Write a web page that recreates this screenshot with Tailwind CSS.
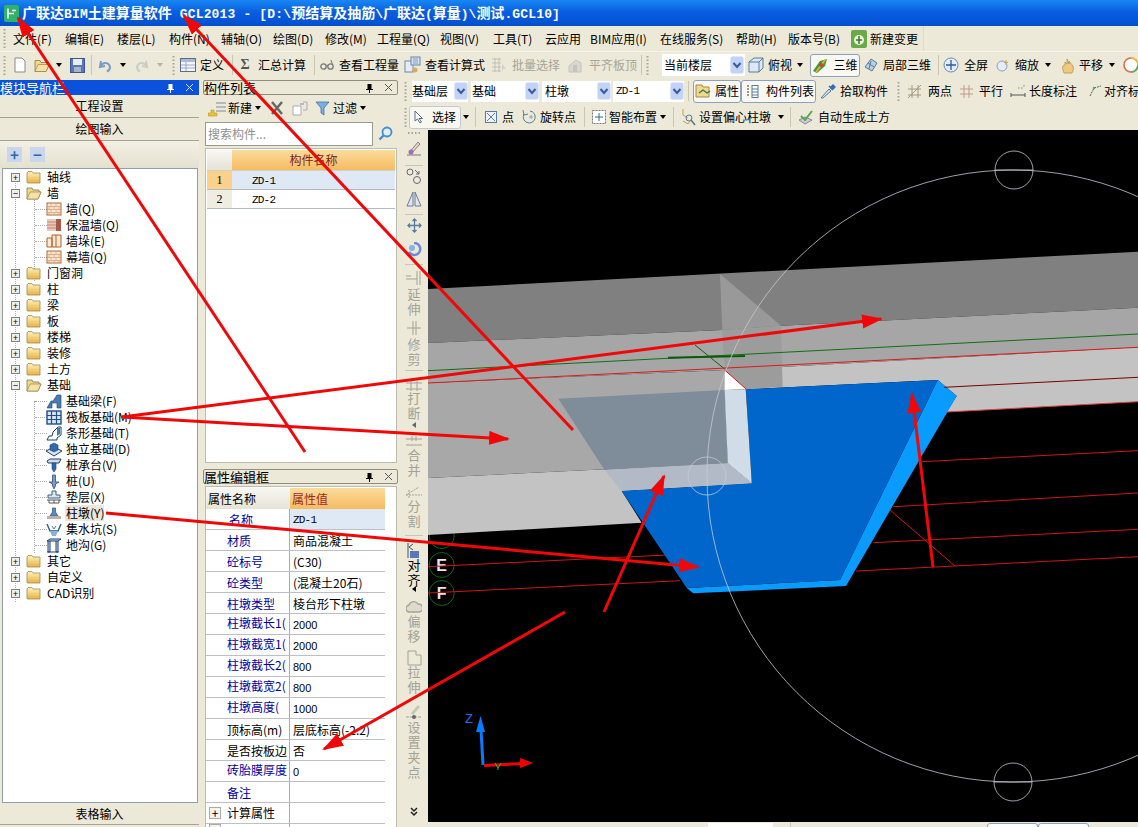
<!DOCTYPE html>
<html lang="zh-CN">
<head>
<meta charset="UTF-8">
<title>GCL2013</title>
<script src="https://cdn.jsdelivr.net/npm/@tailwindcss/browser@4"></script>
</head>
<body class="bg-[#ece9d8]">
<!-- shared icons -->
<svg class="absolute w-0 h-0">
  <defs>
    <linearGradient id="fold" x1="0" y1="0" x2="0" y2="1"><stop offset="0" stop-color="#fff3c0"/><stop offset="1" stop-color="#e8b040"/></linearGradient>
    <symbol id="folder" viewBox="0 0 15 14"><path d="M1 3 L1 12.5 Q1 13 2 13 L14 13 L14 3 L7 3 L6 1.5 L2 1.5 Z" fill="url(#fold)" stroke="#a08a50" stroke-width=".8"/></symbol>
    <symbol id="folderopen" viewBox="0 0 16 14"><path d="M1 2 L1 13 L12 13 L15 6 L13 6 L13 4 L7 4 L6 2 Z" fill="#f0d890" stroke="#8a7840" stroke-width=".8"/><path d="M1 13 L4 6 L15 6 L12 13 Z" fill="#f6e2a4" stroke="#8a7840" stroke-width=".6"/></symbol>
    <symbol id="wall" viewBox="0 0 16 14"><rect x="1" y="1" width="14" height="12" fill="#fbe9d4" stroke="#a86a3a"/><path d="M1 4.5H15M1 7.5H15M1 10.5H15M5 1V4.5M10 1V4.5M3 4.5V7.5M8 4.5V7.5M13 4.5V7.5M5 7.5V10.5M10 7.5V10.5M3 10.5V13M8 10.5V13M13 10.5V13" stroke="#d89a68" stroke-width=".7" fill="none"/></symbol>
    <symbol id="grip" viewBox="0 0 3 21"><path d="M1.5 1V20" stroke="#a8a593" stroke-width="2" stroke-dasharray="1.5 2" fill="none"/></symbol>
    <symbol id="drop" viewBox="0 0 14 18"><rect x=".5" y=".5" width="13" height="17" rx="2" fill="#c3d3f5" stroke="#dfe8fb"/><path d="M3.5 7 L7 11 L10.5 7" stroke="#3a5a9a" stroke-width="2" fill="none"/></symbol>
  </defs>
</svg>

<div class="relative w-[1138px] h-[827px] overflow-hidden flex flex-col bg-[#ece9d8] text-black text-[12px] leading-[16px] font-['Noto_Sans_CJK_SC',sans-serif]">

  <!-- title bar -->
  <div class="h-[26px] shrink-0 flex items-center pl-[4px] bg-gradient-to-b from-[#1a86f2] via-[#0a5be0] to-[#0250cf]">
    <svg class="w-[15px] h-[17px]" viewBox="0 0 15 17"><rect width="15" height="17" rx="2" fill="#2fb36a"/><path d="M4 3.5V13.5M4 8.5H10M8 5.5H12" stroke="#fff" stroke-width="1.6" fill="none"/></svg>
    <span class="ml-[3px] text-white font-bold text-[14px] whitespace-pre">广联达<span class="font-['Liberation_Mono',monospace] text-[13px] tracking-[.15px]">BIM</span>土建算量软件<span class="font-['Liberation_Mono',monospace] text-[13px] tracking-[.15px]"> GCL2013 - [D:\</span>预结算及抽筋<span class="font-['Liberation_Mono',monospace] text-[13px]">\</span>广联达<span class="font-['Liberation_Mono',monospace] text-[13px]">(</span>算量<span class="font-['Liberation_Mono',monospace] text-[13px]">)\</span>测试<span class="font-['Liberation_Mono',monospace] text-[13px] tracking-[.15px]">.GCL10]</span></span>
  </div>

  <!-- menu bar -->
  <div class="h-[26px] shrink-0 flex items-center bg-[#ece9d8] border-b border-[#f6f4ea]">
    <div class="w-[924px] h-full flex items-center bg-[#ece9d8] border-r border-[#dedbc8] pl-[3px]">
      <svg class="w-[3px] h-[21px] mr-[7px]"><use href="#grip"/></svg>
      <span class="w-[52px]">文件(F)</span>
      <span class="w-[52px]">编辑(E)</span>
      <span class="w-[52px]">楼层(L)</span>
      <span class="w-[52px]">构件(N)</span>
      <span class="w-[52px]">辅轴(O)</span>
      <span class="w-[52px]">绘图(D)</span>
      <span class="w-[52px]">修改(M)</span>
      <span class="w-[63px]">工程量(Q)</span>
      <span class="w-[53px]">视图(V)</span>
      <span class="w-[52px]">工具(T)</span>
      <span class="w-[45px]">云应用</span>
      <span class="w-[70px]">BIM应用(I)</span>
      <span class="w-[76px]">在线服务(S)</span>
      <span class="w-[52px]">帮助(H)</span>
      <span class="w-[63px]">版本号(B)</span>
      <svg class="w-[16px] h-[18px] mr-[3px]" viewBox="0 0 16 18"><rect width="16" height="18" rx="2" fill="#6aa84a"/><circle cx="8" cy="10" r="5" fill="#e8f4d8"/><path d="M8 6V14M5 10H11" stroke="#3a7a2a" stroke-width="1.5"/></svg>
      <span>新建变更</span>
    </div>
  </div>

  <!-- standard toolbar -->
  <div class="h-[26px] shrink-0 flex items-center pl-[3px] whitespace-nowrap [&>*]:shrink-0">
    <svg class="w-[3px] h-[21px] mr-[7px]"><use href="#grip"/></svg>
    <svg class="w-[14px] h-[16px] mr-[7px]" viewBox="0 0 14 16"><path d="M2 1H9L12 4V15H2Z" fill="#fff" stroke="#8a8a8a"/></svg>
    <svg class="w-[16px] h-[15px]" viewBox="0 0 16 14"><use href="#folderopen"/></svg>
    <span class="ml-[6px] w-0 h-0 border-x-[3px] border-x-transparent border-t-[4px] border-t-black"></span>
    <svg class="w-[15px] h-[15px] ml-[8px]" viewBox="0 0 15 15"><rect x=".5" y=".5" width="14" height="14" fill="#5a78b8" stroke="#3a5590"/><rect x="3" y="1" width="9" height="6" fill="#e8eef8"/><rect x="4" y="9" width="7" height="5" fill="#a8b4c8"/></svg>
    <div class="w-px h-[20px] bg-[#c9c6b4] ml-[6px] mr-[5px]"></div>
    <svg class="w-[16px] h-[15px]" viewBox="0 0 16 15"><path d="M4 3 L3 9 L8 8 M3.5 8 C6 3.5 12 4 13 9 C13 11 12 12.5 10 13.5" stroke="#7a9ac8" stroke-width="2" fill="none"/></svg>
    <span class="ml-[7px] w-0 h-0 border-x-[3px] border-x-transparent border-t-[4px] border-t-black"></span>
    <svg class="w-[16px] h-[15px] ml-[8px]" viewBox="0 0 16 15"><path d="M12 3 L13 9 L8 8 M12.5 8 C10 3.5 4 4 3 9 C3 11 4 12.5 6 13.5" stroke="#c6cfc4" stroke-width="2" fill="none"/></svg>
    <span class="ml-[7px] w-0 h-0 border-x-[3px] border-x-transparent border-t-[4px] border-t-[#b8b5a5]"></span>
    <svg class="w-[3px] h-[21px] ml-[9px] mr-[5px]"><use href="#grip"/></svg>
    <svg class="w-[16px] h-[14px] mr-[4px]" viewBox="0 0 16 14"><rect x=".5" y=".5" width="15" height="13" fill="#f4f6fa" stroke="#5a6a8a"/><rect x="1" y="1" width="14" height="3" fill="#a8bad8"/><path d="M6 4V13M1 7H15M1 10H15" stroke="#8898b8" stroke-width=".8"/></svg>
    <span class="w-[32px]">定义</span>
    <div class="w-px h-[20px] bg-[#c9c6b4] mr-[5px]"></div>
    <span class="w-[14px] text-[14px] text-[#555] font-bold mr-[6px] text-center font-['Liberation_Serif',serif]">Σ</span>
    <span class="w-[56px]">汇总计算</span>
    <div class="w-px h-[20px] bg-[#c9c6b4] mr-[5px]"></div>
    <svg class="w-[14px] h-[12px] mr-[5px]" viewBox="0 0 14 12"><circle cx="3.5" cy="7.5" r="2.7" fill="none" stroke="#777" stroke-width="1.3"/><circle cx="10.5" cy="7.5" r="2.7" fill="none" stroke="#777" stroke-width="1.3"/><path d="M6 7C7 6 8 6 8 7M12.5 5.5L11 1" stroke="#777" fill="none"/></svg>
    <span class="w-[65px]">查看工程量</span>
    <svg class="w-[17px] h-[18px] mr-[4px]" viewBox="0 0 17 18"><rect x="1" y="5" width="8" height="11" fill="#e8edf5" stroke="#6a88b0"/><rect x="7" y="1" width="9" height="8" fill="#d4dff0" stroke="#6a88b0"/><path d="M9 3H14M9 5H14M9 7H14" stroke="#6a88b0" stroke-width=".7"/><circle cx="11" cy="14" r="2.5" fill="#e0a850"/></svg>
    <span class="w-[66px]">查看计算式</span>
    <svg class="w-[16px] h-[16px] mr-[5px] opacity-50" viewBox="0 0 16 16"><path d="M1 2H10M1 6H10M1 10H10M1 14H10M4 1V15M8 1V15" stroke="#999" fill="none"/><path d="M11 7L15 12H12L11 15Z" fill="#bbb"/></svg>
    <span class="w-[55px] text-[#a6a596]">批量选择</span>
    <svg class="w-[16px] h-[16px] mr-[6px] opacity-60" viewBox="0 0 16 16"><path d="M2 15V9L9 3L14 6V15Z" fill="#ccc" stroke="#aaa"/><rect x="6" y="8" width="4" height="7" fill="#aaa"/></svg>
    <span class="w-[52px] text-[#a6a596]">平齐板顶</span>
    <div class="w-px h-[20px] bg-[#c9c6b4] mr-[4px]"></div>
    <svg class="w-[3px] h-[21px] mr-[13px]"><use href="#grip"/></svg>
    <div class="w-[83px] h-[22px] flex items-center justify-between bg-white pl-[2px]"><span>当前楼层</span><svg class="w-[14px] h-[18px] mr-[1px]"><use href="#drop"/></svg></div>
    <svg class="w-[16px] h-[16px] ml-[3px] mr-[4px]" viewBox="0 0 16 16"><path d="M1 5L6 1H15V11L11 15H1Z" fill="#dce8f5" stroke="#5a7a9a"/><path d="M1 5H11V15M11 5L15 1" stroke="#5a7a9a" fill="none"/></svg>
    <span class="w-[29px]">俯视</span>
    <span class="w-0 h-0 border-x-[3px] border-x-transparent border-t-[4px] border-t-black"></span>
    <div class="ml-[7px] w-[50px] h-[23px] flex items-center justify-center gap-[3px] bg-[#f8f7f0] border border-[#8da0c0] rounded-[3px]">
      <svg class="w-[18px] h-[17px] shrink-0" viewBox="0 0 18 17"><path d="M1 14L8 4L15 2L13 9L5 16Z" fill="#3a9a3a"/><path d="M4 15L13 3" stroke="#e8b030" stroke-width="2"/><circle cx="9" cy="8" r="2" fill="#e03a2a"/></svg><span>三维</span>
    </div>
    <svg class="w-[16px] h-[16px] ml-[3px] mr-[4px]" viewBox="0 0 16 16"><path d="M2 10L8 2L14 6L9 14Z" fill="#b8cfe8" stroke="#5a7a9a"/><path d="M5 6L11 10M8 4L6 12" stroke="#5a7a9a"/></svg>
    <span class="w-[55px]">局部三维</span>
    <div class="w-px h-[20px] bg-[#c9c6b4] mr-[4px]"></div>
    <svg class="w-[16px] h-[16px] mr-[5px]" viewBox="0 0 16 16"><circle cx="8" cy="8" r="7" fill="#e4ecf8" stroke="#6a8ab8"/><path d="M8 3V13M3 8H13" stroke="#2a5aa0" stroke-width="1.3"/></svg>
    <span class="w-[32px]">全屏</span>
    <svg class="w-[15px] h-[15px] mr-[4px]" viewBox="0 0 15 15"><circle cx="6" cy="8" r="5" fill="#e4ecf8" stroke="#8aa0c0"/><path d="M10 2V7M8 4.5H12" stroke="#c8a050"/></svg>
    <span class="w-[30px]">缩放</span>
    <span class="w-0 h-0 border-x-[3px] border-x-transparent border-t-[4px] border-t-black"></span>
    <svg class="w-[14px] h-[18px] ml-[10px] mr-[4px]" viewBox="0 0 14 18"><path d="M3 17C1 12 1 9 4 9V6L6 8V3L8 8V5L12 10C13 13 12 15 11 17Z" fill="#f0c880" stroke="#b08a40" stroke-width=".7"/></svg>
    <span class="w-[30px]">平移</span>
    <span class="w-0 h-0 border-x-[3px] border-x-transparent border-t-[4px] border-t-black"></span>
    <svg class="w-[18px] h-[18px] ml-[7px]" viewBox="0 0 18 18"><circle cx="9" cy="9" r="7" fill="#fff" stroke="#e06a4a" stroke-width="1.6"/><path d="M9 2A7 7 0 0 1 16 9" stroke="#e8c040" stroke-width="1.6" fill="none"/><path d="M16 9A7 7 0 0 1 9 16" stroke="#4ab06a" stroke-width="1.6" fill="none"/></svg>
  </div>

  <!-- work area -->
  <div class="flex-1 flex min-h-0">

    <!-- module navigation -->
    <div class="w-[199px] shrink-0 flex flex-col">
      <div class="h-[15px] mt-[2px] shrink-0 flex items-center bg-[#0a52dc] text-white text-[13px]">
        <span class="flex-1">模块导航栏</span>
        <svg class="w-[9px] h-[10px] mr-[10px]" viewBox="0 0 9 10"><path d="M2.5 1H6.5V6H8V7H5V10H4V7H1V6H2.5Z" fill="#fff"/></svg>
        <svg class="w-[9px] h-[9px] mr-[5px]" viewBox="0 0 9 9"><path d="M1 1L8 8M8 1L1 8" stroke="#dfe8ff" fill="none"/></svg>
      </div>
      <div class="h-[23px] shrink-0 flex items-center justify-center bg-[#ece9d8] border-b border-[#a5a391]">工程设置</div>
      <div class="h-[23px] shrink-0 flex items-center justify-center bg-[#ece9d8] border-b border-[#a5a391]">绘图输入</div>
      <div class="h-[27px] shrink-0 flex items-center gap-[8px] pl-[7px] bg-gradient-to-b from-[#f2f0e4] to-[#e4e1cf]">
        <span class="w-[15px] h-[15px] flex items-center justify-center bg-[#c9d6ee] text-[#2d6ea8] font-bold text-[15px]">+</span>
        <span class="w-[15px] h-[15px] flex items-center justify-center bg-[#c9d6ee] text-[#2d6ea8] font-bold text-[15px]">−</span>
      </div>
      <!-- tree -->
      <div class="relative h-[635px] shrink-0 ml-[2px] mr-[1px] bg-white border border-[#8e9db0]">
        <div class="absolute left-[12px] top-[8px] h-[425px] border-l border-dotted border-[#aaa]"></div>
        <div class="absolute left-[31px] top-[24px] h-[88px] border-l border-dotted border-[#aaa]"></div>
        <div class="absolute left-[31px] top-[232px] h-[152px] border-l border-dotted border-[#aaa]"></div>

        <div class="relative flex items-center h-4 pl-[8px]"><span class="w-[9px] h-[9px] border border-[#808080] bg-[#eee] flex items-center justify-center text-[9px] leading-[7px]">+</span><svg class="w-[15px] h-[14px] ml-[6px]"><use href="#folder"/></svg><span class="ml-[6px]">轴线</span></div>
        <div class="relative flex items-center h-4 pl-[8px]"><span class="w-[9px] h-[9px] border border-[#808080] bg-[#eee] flex items-center justify-center text-[9px] leading-[7px]">−</span><svg class="w-[16px] h-[14px] ml-[6px]"><use href="#folderopen"/></svg><span class="ml-[5px]">墙</span></div>
        <div class="relative flex items-center h-4 pl-[32px]"><span class="w-[12px] border-t border-dotted border-[#aaa]"></span><svg class="w-[16px] h-[14px] -ml-[1px]"><use href="#wall"/></svg><span class="ml-[4px] whitespace-nowrap">墙(Q)</span></div>
        <div class="relative flex items-center h-4 pl-[32px]"><span class="w-[12px] border-t border-dotted border-[#aaa]"></span><svg class="w-[16px] h-[14px] -ml-[1px]" viewBox="0 0 16 14"><rect x="1" y="1" width="14" height="12" fill="#e8c8b8"/><path d="M1 4H10M1 7H10M1 10H10" stroke="#b88a7a"/><rect x="10" y="1" width="5" height="12" fill="#a85a4a"/></svg><span class="ml-[4px] whitespace-nowrap">保温墙(Q)</span></div>
        <div class="relative flex items-center h-4 pl-[32px]"><span class="w-[12px] border-t border-dotted border-[#aaa]"></span><svg class="w-[16px] h-[14px] -ml-[1px]" viewBox="0 0 16 14"><path d="M1 4H6V13H1ZM6 1H15V13H6Z" fill="#fbe9d4" stroke="#b0602a"/><path d="M10 1V13" stroke="#b0602a"/></svg><span class="ml-[4px] whitespace-nowrap">墙垛(E)</span></div>
        <div class="relative flex items-center h-4 pl-[32px]"><span class="w-[12px] border-t border-dotted border-[#aaa]"></span><svg class="w-[16px] h-[14px] -ml-[1px]"><use href="#wall"/></svg><span class="ml-[4px] whitespace-nowrap">幕墙(Q)</span></div>
        <div class="relative flex items-center h-4 pl-[8px]"><span class="w-[9px] h-[9px] border border-[#808080] bg-[#eee] flex items-center justify-center text-[9px] leading-[7px]">+</span><svg class="w-[15px] h-[14px] ml-[6px]"><use href="#folder"/></svg><span class="ml-[6px]">门窗洞</span></div>
        <div class="relative flex items-center h-4 pl-[8px]"><span class="w-[9px] h-[9px] border border-[#808080] bg-[#eee] flex items-center justify-center text-[9px] leading-[7px]">+</span><svg class="w-[15px] h-[14px] ml-[6px]"><use href="#folder"/></svg><span class="ml-[6px]">柱</span></div>
        <div class="relative flex items-center h-4 pl-[8px]"><span class="w-[9px] h-[9px] border border-[#808080] bg-[#eee] flex items-center justify-center text-[9px] leading-[7px]">+</span><svg class="w-[15px] h-[14px] ml-[6px]"><use href="#folder"/></svg><span class="ml-[6px]">梁</span></div>
        <div class="relative flex items-center h-4 pl-[8px]"><span class="w-[9px] h-[9px] border border-[#808080] bg-[#eee] flex items-center justify-center text-[9px] leading-[7px]">+</span><svg class="w-[15px] h-[14px] ml-[6px]"><use href="#folder"/></svg><span class="ml-[6px]">板</span></div>
        <div class="relative flex items-center h-4 pl-[8px]"><span class="w-[9px] h-[9px] border border-[#808080] bg-[#eee] flex items-center justify-center text-[9px] leading-[7px]">+</span><svg class="w-[15px] h-[14px] ml-[6px]"><use href="#folder"/></svg><span class="ml-[6px]">楼梯</span></div>
        <div class="relative flex items-center h-4 pl-[8px]"><span class="w-[9px] h-[9px] border border-[#808080] bg-[#eee] flex items-center justify-center text-[9px] leading-[7px]">+</span><svg class="w-[15px] h-[14px] ml-[6px]"><use href="#folder"/></svg><span class="ml-[6px]">装修</span></div>
        <div class="relative flex items-center h-4 pl-[8px]"><span class="w-[9px] h-[9px] border border-[#808080] bg-[#eee] flex items-center justify-center text-[9px] leading-[7px]">+</span><svg class="w-[15px] h-[14px] ml-[6px]"><use href="#folder"/></svg><span class="ml-[6px]">土方</span></div>
        <div class="relative flex items-center h-4 pl-[8px]"><span class="w-[9px] h-[9px] border border-[#808080] bg-[#eee] flex items-center justify-center text-[9px] leading-[7px]">−</span><svg class="w-[16px] h-[14px] ml-[6px]"><use href="#folderopen"/></svg><span class="ml-[5px]">基础</span></div>
        <div class="relative flex items-center h-4 pl-[32px]"><span class="w-[12px] border-t border-dotted border-[#aaa]"></span><svg class="w-[16px] h-[15px] -ml-[1px]" viewBox="0 0 16 15"><path d="M1 14L5 7H7L11 1H15V14H11V9H6V14Z" fill="#4a7ab0" stroke="#1f3f70" stroke-width=".6"/></svg><span class="ml-[4px] whitespace-nowrap">基础梁(F)</span></div>
        <div class="relative flex items-center h-4 pl-[32px]"><span class="w-[12px] border-t border-dotted border-[#aaa]"></span><svg class="w-[16px] h-[15px] -ml-[1px]" viewBox="0 0 16 15"><rect x="1" y="1" width="14" height="13" fill="#dbe6f3" stroke="#1f4f90" stroke-width="1.4"/><path d="M5.5 1V14M10.5 1V14M1 5.5H15M1 9.5H15" stroke="#1f4f90" stroke-width="1.2"/></svg><span class="ml-[4px] whitespace-nowrap">筏板基础(M)</span></div>
        <div class="relative flex items-center h-4 pl-[32px]"><span class="w-[12px] border-t border-dotted border-[#aaa]"></span><svg class="w-[16px] h-[15px] -ml-[1px]" viewBox="0 0 16 15"><path d="M1 14L3 10H6L7 6L12 1H15V9L11 12V14Z" fill="#fff" stroke="#1f3f70"/><path d="M11 2L14 2V8L11 10Z" fill="#4a7ab0"/></svg><span class="ml-[4px] whitespace-nowrap">条形基础(T)</span></div>
        <div class="relative flex items-center h-4 pl-[32px]"><span class="w-[12px] border-t border-dotted border-[#aaa]"></span><svg class="w-[18px] h-[15px] -ml-[2px]" viewBox="0 0 18 15"><path d="M1 9L9 5L17 9L9 14Z" fill="#dbe6f3" stroke="#1f3f70"/><path d="M5 3L9 1L13 3V8L9 10L5 8Z" fill="#2f6ab0" stroke="#1f3f70" stroke-width=".6"/></svg><span class="ml-[3px] whitespace-nowrap">独立基础(D)</span></div>
        <div class="relative flex items-center h-4 pl-[32px]"><span class="w-[12px] border-t border-dotted border-[#aaa]"></span><svg class="w-[16px] h-[15px] -ml-[1px]" viewBox="0 0 16 15"><path d="M1 3L4 1H15L13 5H2Z" fill="#cfdcec" stroke="#1f3f70"/><path d="M6 5H10V11L8 14L6 11Z" fill="#2f6ab0" stroke="#1f3f70" stroke-width=".6"/></svg><span class="ml-[4px] whitespace-nowrap">桩承台(V)</span></div>
        <div class="relative flex items-center h-4 pl-[32px]"><span class="w-[12px] border-t border-dotted border-[#aaa]"></span><svg class="w-[16px] h-[15px] -ml-[1px]" viewBox="0 0 16 15"><path d="M6.5 1H9.5V8H13L9.5 10V12L8 15L6.5 12V10L3 8H6.5Z" fill="#7a9ac8" stroke="#1f3f70" stroke-width=".7"/></svg><span class="ml-[4px] whitespace-nowrap">桩(U)</span></div>
        <div class="relative flex items-center h-4 pl-[32px]"><span class="w-[12px] border-t border-dotted border-[#aaa]"></span><svg class="w-[16px] h-[15px] -ml-[1px]" viewBox="0 0 16 15"><path d="M6 1H10V5H14V8H2V5H6Z" fill="#dbe6f3" stroke="#3f5f80"/><path d="M1 10H15M3 13H13M3 10V13M8 10V13M13 10V13" stroke="#555"/></svg><span class="ml-[4px] whitespace-nowrap">垫层(X)</span></div>
        <div class="relative flex items-center h-4 pl-[32px]"><span class="w-[12px] border-t border-dotted border-[#aaa]"></span><svg class="w-[16px] h-[15px] -ml-[1px]" viewBox="0 0 16 15"><path d="M6.5 2H9.5V6L12 10H4L6.5 6Z" fill="#5a8ac0" stroke="#1f3f70" stroke-width=".6"/><rect x="1" y="10" width="14" height="3" fill="#b8b5a8"/></svg><span class="ml-[3px] pl-[1px] bg-[#ebe7da] whitespace-nowrap">柱墩(Y)</span></div>
        <div class="relative flex items-center h-4 pl-[32px]"><span class="w-[12px] border-t border-dotted border-[#aaa]"></span><svg class="w-[16px] h-[15px] -ml-[1px]" viewBox="0 0 16 15"><path d="M1 2L4 9H12L15 2" stroke="#2f5f90" stroke-width="1.4" fill="none"/><path d="M4 9L6 14H10L12 9Z" fill="#8ab0dc"/><path d="M6 4L8 7L10 4" stroke="#4a7ab0" fill="none"/></svg><span class="ml-[4px] whitespace-nowrap">集水坑(S)</span></div>
        <div class="relative flex items-center h-4 pl-[32px]"><span class="w-[12px] border-t border-dotted border-[#aaa]"></span><svg class="w-[16px] h-[15px] -ml-[1px]" viewBox="0 0 16 15"><path d="M1 3L4 1H15L12 3ZM2 3V14H4V3M10 3V14H12V3M1 14H13" fill="#cfdcec" stroke="#1f3f70"/></svg><span class="ml-[4px] whitespace-nowrap">地沟(G)</span></div>
        <div class="relative flex items-center h-4 pl-[8px]"><span class="w-[9px] h-[9px] border border-[#808080] bg-[#eee] flex items-center justify-center text-[9px] leading-[7px]">+</span><svg class="w-[15px] h-[14px] ml-[6px]"><use href="#folder"/></svg><span class="ml-[6px]">其它</span></div>
        <div class="relative flex items-center h-4 pl-[8px]"><span class="w-[9px] h-[9px] border border-[#808080] bg-[#eee] flex items-center justify-center text-[9px] leading-[7px]">+</span><svg class="w-[15px] h-[14px] ml-[6px]"><use href="#folder"/></svg><span class="ml-[6px]">自定义</span></div>
        <div class="relative flex items-center h-4 pl-[8px]"><span class="w-[9px] h-[9px] border border-[#808080] bg-[#eee] flex items-center justify-center text-[9px] leading-[7px]">+</span><svg class="w-[15px] h-[14px] ml-[6px]"><use href="#folder"/></svg><span class="ml-[6px]">CAD识别</span></div>
      </div>
      <div class="h-[22px] shrink-0 flex items-center justify-center border-b border-[#a5a391]">表格输入</div>
    </div>

    <!-- component list and properties -->
    <div class="w-[195px] ml-[4px] shrink-0 flex flex-col">
      <div class="h-[15px] mt-[2px] shrink-0 flex items-center border border-[#8f8d7c] rounded-[2px] bg-[#ece9d8]">
        <span class="flex-1 leading-[13px] text-[13px]">构件列表</span>
        <svg class="w-[9px] h-[10px] mr-[10px]" viewBox="0 0 9 10"><path d="M2.5 1H6.5V6H8V7H5V10H4V7H1V6H2.5Z" fill="#000"/></svg>
        <svg class="w-[9px] h-[9px] mr-[4px]" viewBox="0 0 9 9"><path d="M1 1L8 8M8 1L1 8" stroke="#555" fill="none"/></svg>
      </div>
      <div class="h-[26px] shrink-0 flex items-center pl-[5px]">
        <svg class="w-[18px] h-[18px]" viewBox="0 0 18 18"><path d="M8 4H18M8 8H18M8 12H18" stroke="#7a8a9a"/><path d="M3 11H6V14H9V17H0V14H3Z" fill="#f0c030" stroke="#b08a20" stroke-width=".5"/></svg>
        <span class="ml-[2px]">新建</span>
        <span class="ml-[3px] w-0 h-0 border-x-[3px] border-x-transparent border-t-[4px] border-t-black"></span>
        <svg class="w-[14px] h-[14px] ml-[9px]" viewBox="0 0 14 14"><path d="M2 1L12 13M12 1L2 13" stroke="#666" stroke-width="2.4"/></svg>
        <svg class="w-[16px] h-[15px] ml-[8px]" viewBox="0 0 16 15"><path d="M1 5H9V14H1Z" fill="#fff" stroke="#aab"/><path d="M11 1H15V9H11" fill="none" stroke="#aab"/><path d="M8 3H12" stroke="#7a8aa8"/></svg>
        <svg class="w-[15px] h-[15px] ml-[7px]" viewBox="0 0 15 15"><path d="M1 1H14L9 7V14L6 12V7Z" fill="#7aaee0" stroke="#3a6a9a" stroke-width=".7"/></svg>
        <span class="ml-[3px]">过滤</span>
        <span class="ml-[3px] w-0 h-0 border-x-[3px] border-x-transparent border-t-[4px] border-t-black"></span>
      </div>
      <div class="h-[25px] shrink-0 flex items-center ml-[2px]">
        <div class="w-[168px] h-[24px] flex items-center pl-[2px] bg-white border border-[#9a9a90] text-[#8f8f8f]">搜索构件...</div>
        <svg class="w-[15px] h-[15px] ml-[5px]" viewBox="0 0 15 15"><circle cx="9" cy="6" r="4.5" fill="#dff0fb" stroke="#3f8fd0" stroke-width="1.8"/><path d="M5.5 9.5L1.5 13.5" stroke="#3f8fd0" stroke-width="2.4"/></svg>
      </div>
      <div class="h-[315px] shrink-0 mt-[2px] ml-[2px] mr-[1px] bg-white border border-[#bdbcb0] pt-[1px] pl-[1px] pr-[1px]">
        <div class="flex h-[21px] border-b border-[#d0d0c8]">
          <div class="w-[25px] bg-gradient-to-b from-[#f8f7f2] to-[#e6e3d6]"></div>
          <div class="flex-1 flex items-center justify-center bg-gradient-to-b from-[#fbdc9c] to-[#f5bb60] text-[#7a1f1f]">构件名称</div>
        </div>
        <div class="flex h-[19px] border-b border-[#b5bac2]">
          <div class="w-[25px] flex items-center justify-center bg-[#fbd08a] font-['Liberation_Serif',serif]">1</div>
          <div class="flex-1 flex items-center pl-[20px] pt-[2px] bg-[#dfe8f5] text-[11px] tracking-[-.8px] font-['Liberation_Mono',monospace]">ZD-1</div>
        </div>
        <div class="flex h-[19px] border-b border-[#b5bac2]">
          <div class="w-[25px] flex items-center justify-center bg-[#efede2] font-['Liberation_Serif',serif]">2</div>
          <div class="flex-1 flex items-center pl-[20px] pt-[2px] text-[11px] tracking-[-.8px] font-['Liberation_Mono',monospace]">ZD-2</div>
        </div>
      </div>
      <div class="h-[15px] mt-[6px] shrink-0 flex items-center border border-[#8f8d7c] rounded-[2px]">
        <span class="flex-1 leading-[13px] text-[13px]">属性编辑框</span>
        <svg class="w-[9px] h-[10px] mr-[10px]" viewBox="0 0 9 10"><path d="M2.5 1H6.5V6H8V7H5V10H4V7H1V6H2.5Z" fill="#000"/></svg>
        <svg class="w-[9px] h-[9px] mr-[4px]" viewBox="0 0 9 9"><path d="M1 1L8 8M8 1L1 8" stroke="#555" fill="none"/></svg>
      </div>
      <!-- property grid -->
      <div class="flex-1 min-h-0 overflow-hidden mt-[2px] ml-[2px] mr-[1px] bg-white border-x border-t border-[#bdbcb0] pt-[1px] pr-[11px] whitespace-nowrap">
        <div class="flex h-[21px]">
          <div class="w-[84px] flex items-center pl-[2px] bg-gradient-to-b from-[#f8f7f2] to-[#e6e3d6]">属性名称</div>
          <div class="flex-1 flex items-center pl-[2px] bg-gradient-to-b from-[#fbdc9c] to-[#f5bb60] text-[#a0281f]">属性值</div>
        </div>
        <div class="flex h-[21px] border-b border-[#bcc0c6]"><div class="w-[84px] flex items-center pl-[23px] pt-[2px] text-[#0000a8] border-r border-[#a8acb2] overflow-hidden">名称</div><div class="flex-1 flex items-center pl-[3px] pt-[2px] bg-[#dfe8f5] text-[11px] tracking-[-.8px] font-['Liberation_Mono',monospace]">ZD-1</div></div>
        <div class="flex h-[21px] border-b border-[#bcc0c6]"><div class="w-[84px] flex items-center pl-[21px] pt-[2px] text-[#0000a8] border-r border-[#a8acb2] overflow-hidden">材质</div><div class="flex-1 flex items-center pl-[3px] pt-[2px]">商品混凝土</div></div>
        <div class="flex h-[21px] border-b border-[#bcc0c6]"><div class="w-[84px] flex items-center pl-[21px] pt-[2px] text-[#0000a8] border-r border-[#a8acb2] overflow-hidden">砼标号</div><div class="flex-1 flex items-center pl-[3px] pt-[2px]">(C30)</div></div>
        <div class="flex h-[21px] border-b border-[#bcc0c6]"><div class="w-[84px] flex items-center pl-[21px] pt-[2px] text-[#0000a8] border-r border-[#a8acb2] overflow-hidden">砼类型</div><div class="flex-1 flex items-center pl-[3px] pt-[2px]">(混凝土20石)</div></div>
        <div class="flex h-[21px] border-b border-[#bcc0c6]"><div class="w-[84px] flex items-center pl-[21px] pt-[2px] text-[#0000a8] border-r border-[#a8acb2] overflow-hidden">柱墩类型</div><div class="flex-1 flex items-center pl-[3px] pt-[2px]">棱台形下柱墩</div></div>
        <div class="flex h-[21px] border-b border-[#bcc0c6]"><div class="w-[84px] flex items-center pl-[21px] pb-[3px] text-[#0000a8] border-r border-[#a8acb2] overflow-hidden">柱墩截长1(</div><div class="flex-1 flex items-center pl-[3px] pt-[2px] text-[11px] font-['Liberation_Sans',sans-serif]">2000</div></div>
        <div class="flex h-[21px] border-b border-[#bcc0c6]"><div class="w-[84px] flex items-center pl-[21px] pb-[3px] text-[#0000a8] border-r border-[#a8acb2] overflow-hidden">柱墩截宽1(</div><div class="flex-1 flex items-center pl-[3px] pt-[2px] text-[11px] font-['Liberation_Sans',sans-serif]">2000</div></div>
        <div class="flex h-[21px] border-b border-[#bcc0c6]"><div class="w-[84px] flex items-center pl-[21px] pb-[3px] text-[#0000a8] border-r border-[#a8acb2] overflow-hidden">柱墩截长2(</div><div class="flex-1 flex items-center pl-[3px] pt-[2px] text-[11px] font-['Liberation_Sans',sans-serif]">800</div></div>
        <div class="flex h-[21px] border-b border-[#bcc0c6]"><div class="w-[84px] flex items-center pl-[21px] pb-[3px] text-[#0000a8] border-r border-[#a8acb2] overflow-hidden">柱墩截宽2(</div><div class="flex-1 flex items-center pl-[3px] pt-[2px] text-[11px] font-['Liberation_Sans',sans-serif]">800</div></div>
        <div class="flex h-[21px] border-b border-[#bcc0c6]"><div class="w-[84px] flex items-center pl-[21px] pb-[3px] text-[#0000a8] border-r border-[#a8acb2] overflow-hidden">柱墩高度(</div><div class="flex-1 flex items-center pl-[3px] pt-[2px] text-[11px] font-['Liberation_Sans',sans-serif]">1000</div></div>
        <div class="flex h-[21px] border-b border-[#bcc0c6]"><div class="w-[84px] flex items-center pl-[21px] pt-[2px] border-r border-[#a8acb2] overflow-hidden">顶标高(m)</div><div class="flex-1 flex items-center pl-[3px] pt-[2px]">层底标高(-2.2)</div></div>
        <div class="flex h-[21px] border-b border-[#bcc0c6]"><div class="w-[84px] flex items-center pl-[21px] pt-[2px] border-r border-[#a8acb2] overflow-hidden">是否按板边</div><div class="flex-1 flex items-center pl-[3px] pt-[2px]">否</div></div>
        <div class="flex h-[21px] border-b border-[#bcc0c6]"><div class="w-[84px] flex items-center pl-[21px] pb-[2px] text-[#0000a8] border-r border-[#a8acb2] overflow-hidden">砖胎膜厚度</div><div class="flex-1 flex items-center pl-[3px] pt-[2px] text-[11px] font-['Liberation_Sans',sans-serif]">0</div></div>
        <div class="flex h-[21px] border-b border-[#bcc0c6]"><div class="w-[84px] flex items-center pl-[21px] pt-[2px] text-[#0000a8] border-r border-[#a8acb2] overflow-hidden">备注</div><div class="flex-1"></div></div>
        <div class="flex h-[21px] border-b border-[#bcc0c6]"><div class="w-[84px] flex items-center pl-[3px] border-r border-[#a8acb2]"><span class="w-[12px] h-[12px] mr-[6px] flex items-center justify-center border border-[#aaa] bg-[#f4f3ec]">+</span>计算属性</div><div class="flex-1"></div></div>
        <div class="flex h-[21px]"><div class="w-[84px] pl-[3px] border-r border-[#a8acb2]"><span class="block w-[12px] h-[12px] border border-[#aaa] bg-[#f4f3ec]"></span></div><div class="flex-1"></div></div>
      </div>
    </div>

    <!-- drawing area -->
    <div class="flex-1 min-w-0 flex flex-col ml-[5px]">
      <!-- component toolbar -->
      <div class="h-[26px] shrink-0 flex items-center whitespace-nowrap overflow-hidden [&>*]:shrink-0">
        <svg class="w-[3px] h-[21px] ml-[1px] mr-[5px]"><use href="#grip"/></svg>
        <div class="w-[56px] h-[21px] flex items-center justify-between bg-white"><span>基础层</span><svg class="w-[14px] h-[18px]"><use href="#drop"/></svg></div>
        <div class="w-[68px] h-[21px] ml-[3px] flex items-center justify-between pl-[1px] bg-white"><span>基础</span><svg class="w-[14px] h-[18px]"><use href="#drop"/></svg></div>
        <div class="w-[69px] h-[21px] ml-[3px] flex items-center justify-between pl-[3px] bg-white"><span>柱墩</span><svg class="w-[14px] h-[18px]"><use href="#drop"/></svg></div>
        <div class="w-[71px] h-[21px] ml-[2px] flex items-center justify-between pl-[3px] bg-white"><span class="text-[11px] tracking-[-.8px] font-['Liberation_Mono',monospace]">ZD-1</span><svg class="w-[14px] h-[18px]"><use href="#drop"/></svg></div>
        <div class="w-px h-[20px] bg-[#c9c6b4] ml-[4px] mr-[4px]"></div>
        <div class="w-[48px] h-[23px] flex items-center gap-[3px] pl-px bg-[#f8f7f0] border border-[#8da0c0] rounded-[3px]"><svg class="w-[17px] h-[14px]" viewBox="0 0 17 14"><path d="M1 1H7L8 3H14V13H1Z" fill="#f0d890" stroke="#a08a50"/><path d="M4 9L8 6L12 9L15 7" stroke="#3a7a3a" stroke-width="1.4" fill="none"/></svg><span>属性</span></div>
        <div class="w-[75px] h-[23px] flex items-center gap-[7px] pl-[4px] bg-[#f8f7f0] border border-[#8da0c0] rounded-[3px]"><svg class="w-[13px] h-[13px]" viewBox="0 0 13 13"><path d="M1 1H3M1 4H3M1 7H3M1 10H3" stroke="#6a8a5a" stroke-width="1.5"/><rect x="6" y=".5" width="6" height="12" fill="#fff" stroke="#5a7a9a"/><path d="M6 4H12M6 7H12M6 10H12" stroke="#5a7a9a"/></svg><span>构件列表</span></div>
        <svg class="w-[16px] h-[16px] ml-[4px] mr-[4px]" viewBox="0 0 16 16"><path d="M1 15L9 6L11 8L3 15Z" fill="#cfe0f2" stroke="#5a7a9a"/><path d="M9 3L13 7M10 5L13 2L15 4L12 7" stroke="#3a6ab0" stroke-width="1.5" fill="#3a6ab0"/></svg>
        <span class="w-[57px]">拾取构件</span>
        <svg class="w-[3px] h-[21px] mr-[7px]"><use href="#grip"/></svg>
        <svg class="w-[15px] h-[15px] mr-[6px]" viewBox="0 0 15 15"><path d="M5 1V14M11 1V14M1 5H14M1 11H14" stroke="#a09a80"/><path d="M1 14L14 1" stroke="#a09a80"/></svg>
        <span class="w-[31px]">两点</span>
        <svg class="w-[15px] h-[15px] mr-[5px]" viewBox="0 0 15 15"><path d="M5 1V14M10 1V14M1 5H14M1 10H14" stroke="#c09a90"/></svg>
        <span class="w-[31px]">平行</span>
        <svg class="w-[16px] h-[14px] mr-[3px]" viewBox="0 0 16 14"><path d="M1 9V13M15 9V13M1 11H15" stroke="#555"/><path d="M8 4H14M14 1V4" stroke="#6a9a6a" stroke-dasharray="1.5 1.5"/></svg>
        <span class="w-[59px]">长度标注</span>
        <svg class="w-[16px] h-[14px]" viewBox="0 0 16 14"><path d="M2 12L6 4L13 2" stroke="#555" stroke-dasharray="2 1" fill="none"/><circle cx="6" cy="4" r="1.2" fill="#6a9a6a"/></svg>
        <span>对齐标注</span>
      </div>
      <!-- column toolbar -->
      <div class="h-[26px] shrink-0 flex items-center whitespace-nowrap [&>*]:shrink-0">
        <svg class="w-[3px] h-[21px] ml-[1px] mr-[2px]"><use href="#grip"/></svg>
        <div class="w-[52px] h-[23px] flex items-center pl-[4px] bg-[#f8f7f0] border border-[#c4c8d0] rounded-[3px]"><svg class="w-[10px] h-[14px] mr-[8px]" viewBox="0 0 10 14"><path d="M1 1V11L3.5 9L6 13L7.5 12L5 8.5H8.5Z" fill="#fff" stroke="#5a6a8a"/></svg><span>选择</span></div>
        <span class="ml-[2px] w-0 h-0 border-x-[3px] border-x-transparent border-t-[4px] border-t-black"></span>
        <div class="w-px h-[20px] bg-[#c9c6b4] ml-[6px] mr-[9px]"></div>
        <svg class="w-[12px] h-[12px] mr-[5px]" viewBox="0 0 12 12"><rect x=".5" y=".5" width="11" height="11" fill="#eef2f8" stroke="#5a7aa0"/><path d="M2 2L10 10M10 2L2 10" stroke="#5a7aa0"/></svg>
        <span class="w-[20px]">点</span>
        <svg class="w-[15px] h-[16px] mr-[3px]" viewBox="0 0 15 16"><path d="M2 5A6 6 0 1 0 8 2" fill="none" stroke="#5a7aa0"/><path d="M7 8H11M9 6V10" stroke="#8aa"/><path d="M1 1L2 6L6 5" fill="none" stroke="#5a7aa0"/></svg>
        <span class="w-[37px]">旋转点</span>
        <div class="w-px h-[20px] bg-[#c9c6b4] ml-[7px] mr-[7px]"></div>
        <svg class="w-[14px] h-[14px] mr-[3px]" viewBox="0 0 14 14"><rect x=".5" y=".5" width="13" height="13" fill="#fff" stroke="#777" stroke-dasharray="2 1"/><path d="M7 3V11M3 7H11" stroke="#2a6a9a"/></svg>
        <span>智能布置</span>
        <span class="ml-[3px] w-0 h-0 border-x-[3px] border-x-transparent border-t-[4px] border-t-black"></span>
        <div class="w-px h-[20px] bg-[#c9c6b4] ml-[7px] mr-[5px]"></div>
        <svg class="w-[17px] h-[18px] mr-[3px]" viewBox="0 0 17 18"><path d="M4 1V7L9 10M13 10L9 16L4 13" stroke="#c8a050" fill="none"/><circle cx="10" cy="10" r="3" fill="none" stroke="#5a7a9a"/><path d="M12 12L16 17" stroke="#5a7a9a" stroke-width="1.6"/></svg>
        <span>设置偏心柱墩</span>
        <span class="ml-[7px] w-0 h-0 border-x-[3px] border-x-transparent border-t-[4px] border-t-black"></span>
        <div class="w-px h-[20px] bg-[#c9c6b4] ml-[6px] mr-[7px]"></div>
        <svg class="w-[15px] h-[15px] mr-[5px]" viewBox="0 0 15 15"><path d="M1 10L7 14L14 10L7 7Z" fill="#ccd" stroke="#889"/><path d="M3 6L7 10L14 1" stroke="#5aa84a" stroke-width="2" fill="none"/></svg>
        <span>自动生成土方</span>
      </div>
      <!-- vertical tools + canvas -->
      <div class="h-[692px] shrink-0 flex">
        <div class="w-[25px] shrink-0 flex flex-col items-center pr-[3px] text-[#a3a294] text-[13px] leading-[15px]">
          <svg class="w-[15px] h-[4px] shrink-0 mt-[1px]" viewBox="0 0 15 4"><path d="M1 2H14" stroke="#a8a593" stroke-width="2" stroke-dasharray="1.5 2"/></svg>
          <svg class="w-[16px] h-[18px] shrink-0 mt-[4px]" viewBox="0 0 16 18"><path d="M3 14L12 3L14 5L5 15Z" fill="#e8d8b0" stroke="#8a7a9a"/><path d="M1 16H15" stroke="#777"/><circle cx="5" cy="13" r="2.5" fill="#a070b0"/></svg>
          <div class="w-[18px] h-px shrink-0 bg-[#c9c6b4] mt-[8px]"></div>
          <svg class="w-[16px] h-[16px] shrink-0 mt-[2px]" viewBox="0 0 16 16"><circle cx="4" cy="4" r="3" fill="none" stroke="#667"/><circle cx="11" cy="12" r="3.5" fill="none" stroke="#667"/><path d="M9 2L13 6M13 3V6H10" stroke="#667" fill="none"/></svg>
          <svg class="w-[16px] h-[18px] shrink-0 mt-[6px]" viewBox="0 0 16 18"><path d="M7 2L1 16H7ZM9 2L15 16H9Z" fill="#dfe6f0" stroke="#6a7a9a"/></svg>
          <div class="w-[18px] h-px shrink-0 bg-[#c9c6b4] mt-[6px]"></div>
          <svg class="w-[15px] h-[15px] shrink-0 mt-[3px]" viewBox="0 0 15 15"><path d="M7.5 1V14M1 7.5H14M5.5 3L7.5 1L9.5 3M5.5 12L7.5 14L9.5 12M3 5.5L1 7.5L3 9.5M12 5.5L14 7.5L12 9.5" stroke="#5a7aa0" stroke-width="1.3" fill="none"/></svg>
          <svg class="w-[15px] h-[15px] shrink-0 mt-[9px]" viewBox="0 0 15 15"><path d="M7 1A6 6 0 1 1 2 10" stroke="#6a8ad8" stroke-width="2.5" fill="none"/><circle cx="5" cy="6" r="3" fill="#8ab0e8"/></svg>
          <div class="w-[18px] h-px shrink-0 bg-[#c9c6b4] mt-[7px]"></div>
          <svg class="w-[18px] h-[16px] shrink-0 mt-[5px]" viewBox="0 0 18 16"><path d="M1 9H12M1 6H6M12 1V15M15 1V15" stroke="#a3a294" fill="none"/></svg>
          <span class="h-[30px] mt-[2px] [writing-mode:vertical-rl] tracking-[2px]">延伸</span>
          <svg class="w-[18px] h-[16px] shrink-0 mt-[2px]" viewBox="0 0 18 16"><path d="M2 8H16M8 1V15M11 1V15" stroke="#a3a294" fill="none"/></svg>
          <span class="h-[30px] mt-[2px] [writing-mode:vertical-rl] tracking-[2px]">修剪</span>
          <div class="w-[18px] h-px shrink-0 bg-[#c9c6b4] mt-[2px]"></div>
          <svg class="w-[18px] h-[14px] shrink-0 mt-[7px]" viewBox="0 0 18 14"><path d="M1 5H17M1 11H17M6 3V13M12 3V13" stroke="#a3a294" fill="none"/></svg>
          <span class="h-[30px] [writing-mode:vertical-rl] tracking-[2px]">打断</span>
          <span class="w-0 h-0 shrink-0 border-y-[3px] border-y-transparent border-r-[4px] border-r-[#666]"></span>
          <svg class="w-[18px] h-[12px] shrink-0 mt-[7px]" viewBox="0 0 18 12"><path d="M1 4H17M1 10H17M7 1V6M11 1V6" stroke="#a3a294" fill="none"/></svg>
          <span class="h-[30px] mt-[2px] [writing-mode:vertical-rl] tracking-[2px]">合并</span>
          <svg class="w-[18px] h-[16px] shrink-0 mt-[5px]" viewBox="0 0 18 16"><path d="M1 11L14 3M1 11H17M4 6V15" stroke="#a3a294" fill="none" stroke-dasharray="2 1"/></svg>
          <span class="h-[30px] [writing-mode:vertical-rl] tracking-[2px]">分割</span>
          <div class="w-[18px] h-px shrink-0 bg-[#c9c6b4] mt-[5px]"></div>
          <svg class="w-[14px] h-[17px] shrink-0 mt-[6px]" viewBox="0 0 14 17"><path d="M1 1V16" stroke="#456" /><path d="M6 2L2 5L6 8" stroke="#456" fill="none"/><rect x="3" y="9" width="9" height="7" fill="#5a78b8"/></svg>
          <span class="h-[30px] text-black [writing-mode:vertical-rl] tracking-[2px]">对齐</span>
          <span class="w-0 h-0 shrink-0 border-y-[3px] border-y-transparent border-r-[4px] border-r-black -mt-[3px]"></span>
          <svg class="w-[16px] h-[14px] shrink-0 mt-[8px]" viewBox="0 0 16 14"><path d="M4 12A3.5 3.5 0 0 1 3 5A5 5 0 0 1 12 4A4 4 0 0 1 13 12Z" fill="#dedbcc" stroke="#a3a294" stroke-width="1.4"/></svg>
          <span class="h-[30px] mt-[1px] [writing-mode:vertical-rl] tracking-[2px]">偏移</span>
          <svg class="w-[16px] h-[17px] shrink-0 mt-[5px]" viewBox="0 0 16 17"><path d="M2 1H10V5H15V15H2Z" fill="none" stroke="#a3a294"/></svg>
          <span class="h-[30px] -mt-[1px] [writing-mode:vertical-rl] tracking-[2px]">拉伸</span>
          <svg class="w-[18px] h-[18px] shrink-0 mt-[7px]" viewBox="0 0 18 18"><path d="M6 10L13 2L15 4L8 12Z" fill="#c8c5b6"/><path d="M1 14H17" stroke="#a3a294" stroke-dasharray="3 1"/><circle cx="9" cy="14" r="2" fill="#666"/></svg>
          <span class="h-[60px] [writing-mode:vertical-rl] tracking-[2px]">设置夹点</span>
          <svg class="w-[8px] h-[10px] shrink-0 mt-[26px]" viewBox="0 0 8 10"><path d="M1 1L4 4L7 1M1 5L4 8L7 5" stroke="#222" stroke-width="1.5" fill="none"/></svg>
        </div>
        <!-- 3D view -->
        <svg class="w-[710px] h-[692px] shrink-0 bg-black" viewBox="428 130 710 692">
          <circle cx="441.7" cy="536" r="12.5" fill="none" stroke="#0a6a0a"/>
          <circle cx="441.7" cy="565" r="12.5" fill="none" stroke="#0a6a0a"/>
          <circle cx="441.7" cy="593" r="12.5" fill="none" stroke="#0a6a0a"/>
          <text x="441.7" y="571" text-anchor="middle" fill="#e8e8e8" font-size="16" font-weight="700" font-family="Liberation Sans">E</text>
          <text x="441.7" y="599" text-anchor="middle" fill="#e8e8e8" font-size="16" font-weight="700" font-family="Liberation Sans">F</text>
          <!-- left and lower red grid lines -->
          <path d="M428 566.7L666.7 555M428 593L680 580.7M893.3 506.7L1138 493M873.3 542.7L1138 529.3M856 571L1138 556.7M921.7 461.7L1138 450.7M890 510L955 566" stroke="#d01414" stroke-width="1" fill="none"/>
          <!-- beam faces -->
          <polygon points="428,289 1138,251.7 1138,307.7 781,325.7 722,330 428,343" fill="#808080"/>
          <polygon points="720,274 781,325.7 722.4,330" fill="#999999"/>
          <polygon points="428,343 722,330 781,325.7 1138,307.7 1138,347.3 724.7,370 428,383" fill="#a6a6a6"/>
          <polygon points="724.7,370 1138,347.3 1138,401.7 946.6,412 956.7,396 937.7,380 746,389.3" fill="#c3c3c3"/>
          <polygon points="722,330 781,325.7 782.6,386.7 746,389.3 724.7,370" fill="#9c9c9c"/>
          <polygon points="428,383 724.7,370 727.8,463.3 428,478" fill="#a8a8a8"/>
          <polygon points="428,478 727.8,463.3 751.8,483.3 621.7,491 641.7,522.7 428,535" fill="#c3c3c3"/>
          <!-- column pier -->
          <polygon points="937.7,380 956.7,396 846,586 693.3,593.3 686.7,588 840,580" fill="#0a9bff"/>
          <polygon points="745.7,389.3 937.7,380 840,580 686.7,588 621.7,491 751.7,483.3" fill="#0066cc"/>
          <polygon points="558.4,398.7 724.7,390 727.8,463.3 604.6,470" fill="#7f8c9a"/>
          <polygon points="604.6,470 727.8,463.3 751.8,483.3 621.4,490.7" fill="#b1bac6"/>
          <polygon points="724.7,390 745.7,389.3 751.8,483.3 727.8,463.3" fill="#d0dce8"/>
          <polygon points="724.7,370 746.4,389.3 724.7,390" fill="#ffffff"/>
          <!-- axis lines -->
          <path d="M428 370.7L1138 334" stroke="#107010" fill="none"/>
          <path d="M668 357.7L745 356" stroke="#0a5a0a" stroke-width="2" fill="none"/>
          <path d="M695 345L724.7 369" stroke="#1a5a1a" fill="none"/>
          <path d="M428 383L1138 347.3M724.7 370L746.4 389.3" stroke="#e01818" fill="none"/>
          <path d="M944.3 387.3L1138 377.3" stroke="#7a0000" fill="none"/>
          <path d="M946.6 412L1138 401.7" stroke="#e04040" fill="none"/>
          <!-- grip circles -->
          <g fill="none" stroke="#c4cad0" stroke-width=".8">
            <circle cx="1013" cy="476" r="306"/>
            <circle cx="1014" cy="170" r="19"/>
            <circle cx="1013" cy="782" r="19"/>
            <circle cx="707" cy="476" r="19"/>
            <path d="M995 170H1033M994 782H1032"/>
          </g>
          <!-- UCS -->
          <path d="M483 765L481 730" stroke="#0a7aff" stroke-width="3" fill="none"/>
          <polygon points="480.5,716 485,732 476,732" fill="#0a7aff"/>
          <text x="465" y="723" fill="#2a6af0" font-size="13" font-family="Liberation Sans">Z</text>
          <path d="M484 765.5L522 763.5" stroke="#f00000" stroke-width="3" fill="none"/>
          <polygon points="533,763 520,758 520,768" fill="#f00000"/>
          <path d="M495 763L498 768L501 763M498 768V770" stroke="#30c030" fill="none"/>
        </svg>
      </div>
      <!-- bottom command strip -->
      <div class="h-[5px] shrink-0 relative overflow-hidden">
        <div class="absolute left-[305px] top-[1px] w-[65px] h-[6px] bg-white"></div>
        <div class="absolute left-[387px] top-0 w-px h-[5px] bg-[#c9c6b4]"></div>
        <div class="absolute left-[584px] top-[1px] w-[51px] h-[8px] bg-white border border-[#8da0c0] rounded-[3px]"></div>
        <div class="absolute left-[635px] top-[1px] w-[51px] h-[8px] bg-white border border-[#8da0c0] rounded-[3px]"></div>
      </div>
    </div>
  </div>

  <!-- red callout arrows drawn over the screenshot -->
  <svg class="absolute inset-0 w-[1138px] h-[827px] pointer-events-none" viewBox="0 0 1138 827">
    <defs>
      <marker id="head" markerUnits="userSpaceOnUse" markerWidth="22" markerHeight="16" refX="19" refY="7" orient="auto"><path d="M0 0L21 7L0 14Z" fill="#f00808"/></marker>
    </defs>
    <g stroke="#f00808" stroke-width="3" fill="none" marker-end="url(#head)">
      <line x1="305" y1="452" x2="18" y2="18"/>
      <line x1="573" y1="430" x2="184" y2="16"/>
      <line x1="122" y1="417" x2="881" y2="319"/>
      <line x1="122" y1="417" x2="508" y2="439"/>
      <line x1="106" y1="513" x2="698" y2="567"/>
      <line x1="604" y1="612" x2="664" y2="476"/>
      <line x1="933" y1="567" x2="912" y2="394"/>
      <line x1="565" y1="612" x2="324" y2="749"/>
    </g>
  </svg>
</div>
</body>
</html>
